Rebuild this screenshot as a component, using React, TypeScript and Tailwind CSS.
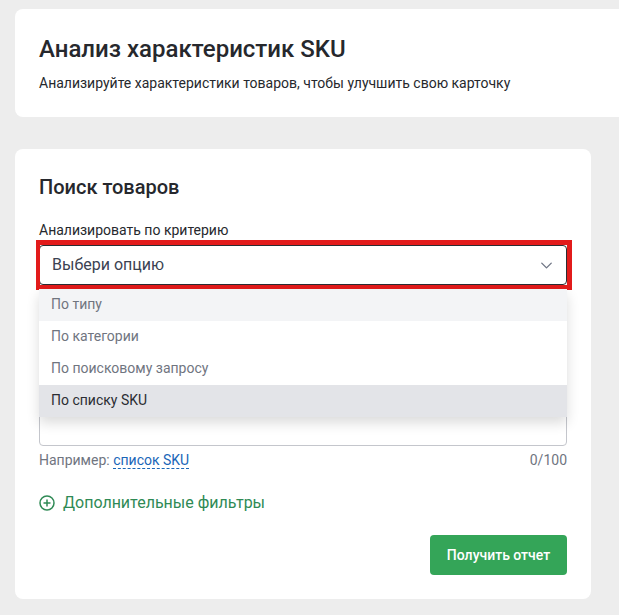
import { ChevronDown } from 'lucide-react'

const options = [
  { label: 'По типу', className: 'bg-[#f3f4f6] text-[#70757f]' },
  { label: 'По категории', className: 'bg-white text-[#70757f]' },
  { label: 'По поисковому запросу', className: 'bg-white text-[#70757f]' },
  { label: 'По списку SKU', className: 'bg-[#e3e4e8] text-[#2b2d33]' },
]

export default function App() {
  return (
    <div className="h-[615px] overflow-hidden bg-[#ededed] pl-[15px] pt-[9px] font-['Roboto',sans-serif] text-[#26282d]">
      <section className="h-[108px] w-[620px] rounded-l-lg bg-white pl-6 pt-[25px]">
        <h1 className="text-2xl leading-[30px] font-medium">Анализ характеристик SKU</h1>
        <p className="mt-[9px] text-[14px] leading-5">
          Анализируйте характеристики товаров, чтобы улучшить свою карточку
        </p>
      </section>

      <section className="mt-8 h-[450px] w-[576px] rounded-lg bg-white pt-[26px] pr-6 pl-6">
        <h2 className="text-[20px] leading-6 font-medium">Поиск товаров</h2>
        <label className="mt-[21px] block text-[14px] leading-5">Анализировать по критерию</label>

        <div className="relative mt-[5px]">
          <button className="flex h-10 w-full items-center justify-between rounded border border-[#2b2d33] bg-white pr-[10px] pl-3 text-[16px] text-[#3b4252]">
            <span>Выбери опцию</span>
            <ChevronDown className="h-[19px] w-[19px] text-[#6f7685]" strokeWidth={1.7} />
          </button>
          <div className="pointer-events-none absolute -top-[5px] -right-[5px] -bottom-[5px] -left-[3px] border-[5px] border-l-4 border-[#e21b1b]" />
          <ul className="absolute top-[44px] right-0 left-0 z-10 shadow-[0_6px_12px_rgba(0,0,0,0.14)]">
            {options.map((o) => (
              <li
                key={o.label}
                className={`flex h-8 items-center pb-0.5 pl-3 text-[14px] ${o.className}`}
              >
                {o.label}
              </li>
            ))}
          </ul>
        </div>

        <textarea
          readOnly
          className="mt-[61px] block h-[100px] w-full resize-none rounded border border-[#c4c6cc] bg-white"
        />
        <div className="mt-[4px] flex items-center justify-between text-[14px] leading-5 text-[#70757f]">
          <span>
            Например:{' '}
            <a className="border-b border-dashed border-[#1a66b8] text-[#1a66b8]">список SKU</a>
          </span>
          <span>0/100</span>
        </div>

        <button className="mt-[21px] flex items-center gap-2 text-[16px] leading-6 text-[#2f8a55]">
          <svg viewBox="0 0 16 16" className="h-4 w-4" fill="none" stroke="#2f8a55" strokeWidth="1.5">
            <circle cx="8" cy="8" r="7" />
            <path d="M8 4.5v7M4.5 8h7" />
          </svg>
          Дополнительные фильтры
        </button>

        <div className="mt-5 flex justify-end">
          <button className="h-10 w-[137px] rounded bg-[#34a558] text-[14px] font-medium text-white">
            Получить отчет
          </button>
        </div>
      </section>
    </div>
  )
}
